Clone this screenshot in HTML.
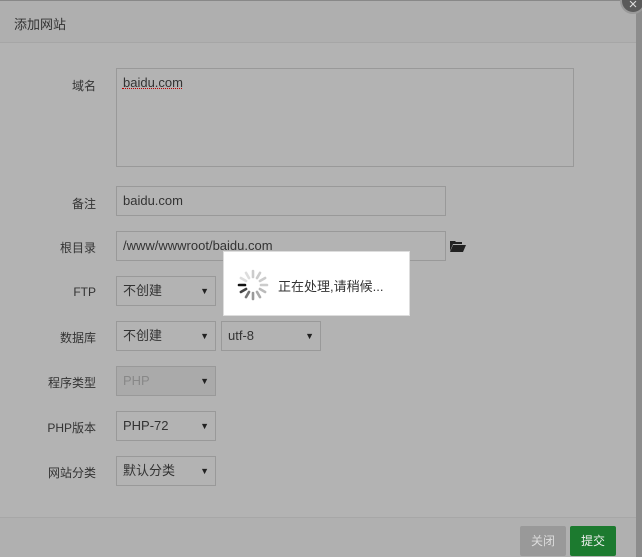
<!DOCTYPE html>
<html><head><meta charset="utf-8"><style>
*{margin:0;padding:0;box-sizing:border-box}
body{width:642px;height:557px;overflow:hidden;background:#b3b3b3;font-family:"Liberation Sans","Noto Sans CJK SC",sans-serif;font-size:12px;color:#333;position:relative}
.abs{position:absolute}
.hdr{left:0;top:0;width:636px;height:43px;background:#afafaf;border-bottom:1px solid #a6a6a6;border-top:1px solid #888}
.hdr span{position:absolute;left:14px;top:13px;font-size:13px;color:#333}
.strip{left:636px;top:0;width:6px;height:557px;background:#8c8c8c}
.lbl{width:96px;text-align:right;color:#333;font-size:12px}
.in{border:1px solid #999;background:#b3b3b3;height:30px;padding:0 6px;line-height:28px;font-size:13px;color:#333}
.sel:after{content:"▼";position:absolute;right:6px;top:0;font-size:9px;color:#222}
.ftr{left:0;top:517px;width:636px;height:40px;background:#b0b0b0;border-top:1px solid #a7a7a7}
.btn{height:30px;width:46px;color:#ddd;text-align:center;line-height:30px;font-size:12px;border-radius:2px}
</style></head><body>
<div class="abs hdr"><span>添加网站</span></div>
<div class="abs strip"></div>
<div class="abs" style="left:620px;top:-12px;width:26px;height:26px;border-radius:50%;background:#5a5a5a;border:2px solid #999;color:#ddd;font-size:15px;text-align:center;line-height:30px">×</div>

<div class="abs lbl" style="left:0;top:77px">域名</div>
<div class="abs in" style="left:116px;top:68px;width:458px;height:99px;line-height:28px">baidu.com</div>
<div class="abs" style="left:122px;top:88px;width:60px;border-bottom:1px dotted #b00"></div>

<div class="abs lbl" style="left:0;top:195px">备注</div>
<div class="abs in" style="left:116px;top:186px;width:330px">baidu.com</div>

<div class="abs lbl" style="left:0;top:239px">根目录</div>
<div class="abs in" style="left:116px;top:231px;width:330px">/www/wwwroot/baidu.com</div>
<svg class="abs" style="left:450px;top:240px" width="16" height="12" viewBox="0 0 16 12"><path d="M0 1h5l1 1h6v2H3L0 11z M3 5h13l-3 7H0z" fill="#222"/></svg>

<div class="abs lbl" style="left:0;top:285px">FTP</div>
<div class="abs in sel" style="left:116px;top:276px;width:100px">不创建</div>

<div class="abs lbl" style="left:0;top:329px">数据库</div>
<div class="abs in sel" style="left:116px;top:321px;width:100px">不创建</div>
<div class="abs in sel" style="left:221px;top:321px;width:100px">utf-8</div>

<div class="abs lbl" style="left:0;top:374px">程序类型</div>
<div class="abs in sel" style="left:116px;top:366px;width:100px;background:#aaa;color:#888">PHP</div>

<div class="abs lbl" style="left:0;top:419px">PHP版本</div>
<div class="abs in sel" style="left:116px;top:411px;width:100px">PHP-72</div>

<div class="abs lbl" style="left:0;top:464px">网站分类</div>
<div class="abs in sel" style="left:116px;top:456px;width:100px">默认分类</div>

<div class="abs ftr"></div>
<div class="abs btn" style="left:520px;top:526px;background:#999">关闭</div>
<div class="abs btn" style="left:570px;top:526px;background:#1c7a2f;color:#eee">提交</div>

<div class="abs" style="left:223px;top:251px;width:187px;height:65px;background:#fff;border:1px solid #ddd"></div>
<svg class="abs" style="left:236px;top:268px" width="34" height="34" viewBox="-17 -17 34 34">
<g stroke-width="2.6" stroke-linecap="round">
<line x1="0" y1="-8" x2="0" y2="-14" stroke="#ccc" transform="rotate(0)"/>
<line x1="0" y1="-8" x2="0" y2="-14" stroke="#ccc" transform="rotate(30)"/>
<line x1="0" y1="-8" x2="0" y2="-14" stroke="#ccc" transform="rotate(60)"/>
<line x1="0" y1="-8" x2="0" y2="-14" stroke="#ccc" transform="rotate(90)"/>
<line x1="0" y1="-8" x2="0" y2="-14" stroke="#bbb" transform="rotate(120)"/>
<line x1="0" y1="-8" x2="0" y2="-14" stroke="#aaa" transform="rotate(150)"/>
<line x1="0" y1="-8" x2="0" y2="-14" stroke="#999" transform="rotate(180)"/>
<line x1="0" y1="-8" x2="0" y2="-14" stroke="#777" transform="rotate(210)"/>
<line x1="0" y1="-8" x2="0" y2="-14" stroke="#444" transform="rotate(240)"/>
<line x1="0" y1="-8" x2="0" y2="-14" stroke="#111" transform="rotate(270)"/>
<line x1="0" y1="-8" x2="0" y2="-14" stroke="#ddd" transform="rotate(300)"/>
<line x1="0" y1="-8" x2="0" y2="-14" stroke="#ddd" transform="rotate(330)"/>
</g></svg>
<div class="abs" style="left:278px;top:276px;font-size:13px;color:#333">正在处理,请稍候...</div>
</body></html>
